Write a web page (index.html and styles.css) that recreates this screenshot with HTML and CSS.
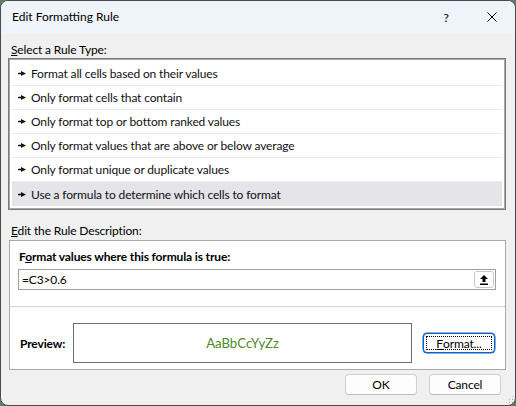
FILE: index.html
```html
<!DOCTYPE html>
<html>
<head>
<meta charset="utf-8">
<link rel="stylesheet" href="styles.css">
</head>
<body>
<div class="window">
  <div class="titlebar">
    <span class="title">Edit Formatting Rule</span>
    <span class="tb-btn">?</span>
    <span class="tb-btn"><svg width="10" height="10" viewBox="0 0 10 10"><path d="M0.5 0.5L9.5 9.5M9.5 0.5L0.5 9.5" stroke="#000" stroke-width="1" fill="none"/></svg></span>
  </div>
  <div class="body">
    <div class="label"><u>S</u>elect a Rule Type:</div>
    <div class="listbox">
      <div class="row"><svg class="bullet" width="8" height="5" viewBox="0 0 8 5"><path d="M0 1.8h3V0l5 2.5L3 5V3.2H0z"/></svg><span>Format all cells based on their values</span></div>
      <div class="row"><svg class="bullet" width="8" height="5" viewBox="0 0 8 5"><path d="M0 1.8h3V0l5 2.5L3 5V3.2H0z"/></svg><span>Only format cells that contain</span></div>
      <div class="row"><svg class="bullet" width="8" height="5" viewBox="0 0 8 5"><path d="M0 1.8h3V0l5 2.5L3 5V3.2H0z"/></svg><span>Only format top or bottom ranked values</span></div>
      <div class="row"><svg class="bullet" width="8" height="5" viewBox="0 0 8 5"><path d="M0 1.8h3V0l5 2.5L3 5V3.2H0z"/></svg><span>Only format values that are above or below average</span></div>
      <div class="row"><svg class="bullet" width="8" height="5" viewBox="0 0 8 5"><path d="M0 1.8h3V0l5 2.5L3 5V3.2H0z"/></svg><span>Only format unique or duplicate values</span></div>
      <div class="row selected"><svg class="bullet" width="8" height="5" viewBox="0 0 8 5"><path d="M0 1.8h3V0l5 2.5L3 5V3.2H0z"/></svg><span>Use a formula to determine which cells to format</span></div>
    </div>
    <div class="label label2"><u>E</u>dit the Rule Description:</div>
    <div class="group">
      <div class="heading">F<u>o</u>rmat values where this formula is true:</div>
      <div class="input">
        <span class="input-text">=C3&gt;0.6</span>
        <span class="ref-btn"><svg width="8" height="10" viewBox="0 0 8 10"><path d="M4 0L8 4H5.5V7H2.5V4H0Z" fill="#000"/><rect x="0" y="8.5" width="8" height="1.5" fill="#000"/></svg></span>
      </div>
      <div class="sep"></div>
      <div class="preview-row">
        <span class="preview-label">Preview:</span>
        <div class="preview-box">AaBbCcYyZz</div>
        <span class="btn focus"><u>F</u>ormat...</span>
      </div>
    </div>
    <div class="actions">
      <span class="btn">OK</span>
      <span class="btn">Cancel</span>
    </div>
  </div>
  <div class="grip"></div>
</div>
</body>
</html>
```
FILE: styles.css
```css
html, body { margin: 0; padding: 0; background: #5f7f62; }
body { font-family: Lato, "Noto Sans", sans-serif; font-size: 12px; letter-spacing: -0.14px; color: #000; }
.window { width: 516px; height: 406px; box-sizing: border-box; border: 1px solid #4a4a4a; border-radius: 8px; background: #f0f0f0; overflow: hidden; display: flex; flex-direction: column; position: relative; }
.titlebar { height: 32px; flex: none; background: #eef4f9; display: flex; align-items: center; padding-left: 11px; }
.title { flex: 1; line-height: 16px; letter-spacing: 0; }
.tb-btn { width: 46px; height: 32px; display: flex; align-items: center; justify-content: center; font-size: 12px; }
.body { padding: 9px 9px 0 7px; display: flex; flex-direction: column; }
.label { line-height: 16px; padding-left: 3px; }
.label2 { margin-top: 13px; margin-bottom: 1px; }
.listbox { height: 152px; box-sizing: border-box; border: 1px solid #7a7a7a; box-shadow: inset 0 0 0 1px #a8a8a8; padding: 3px; background: #fff; }
.row { height: 24px; box-sizing: border-box; border-bottom: 1px solid #ebebeb; display: flex; align-items: center; padding-left: 6px; color: #111; }
.row.selected { border-bottom: none; background: #e4e4e9; }
.bullet { fill: #111; margin-right: 5px; flex: none; }
.group { margin-left: 1px; height: 130px; box-sizing: border-box; border: 1px solid #a9a9a9; background: #fff; padding: 8px 0 0 0; }
.heading { font-weight: bold; line-height: 16px; padding-left: 9px; }
.input { margin: 4px 9px 0 8px; height: 21px; box-sizing: border-box; border: 1px solid #a0a0a0; display: flex; align-items: center; padding: 0 1px 0 3px; }
.input-text { flex: 1; }
.ref-btn { width: 20px; height: 17px; box-sizing: border-box; border: 1px solid #c9c9c9; border-radius: 3px; display: flex; align-items: center; justify-content: center; background: #fff; }
.sep { height: 1px; background: #d4d4d4; margin-top: 16px; }
.preview-row { margin-top: 16px; display: flex; align-items: center; padding-left: 10px; }
.preview-label { font-weight: bold; width: 53px; }
.preview-box { width: 339px; height: 40px; box-sizing: border-box; border: 1px solid #6e6e6e; display: flex; align-items: center; justify-content: center; color: #4f8a2a; margin-right: 11px; font-size: 13.2px; letter-spacing: 0; }
.btn { width: 72px; height: 21px; box-sizing: border-box; border: 1px solid #d0d0d0; border-bottom-color: #bdbdbd; border-radius: 4px; background: #fdfdfd; display: flex; align-items: center; justify-content: center; position: relative; }
.btn.focus { height: 20px; border: 1px solid #0a62c4; box-shadow: 0 0 0 0.5px #0a62c4; }
.btn.focus::after { content: ""; position: absolute; left: 2px; top: 2px; right: 2px; bottom: 2px; border: 1px dotted #000; }
.actions { display: flex; justify-content: flex-end; gap: 12px; margin-top: 4px; margin-right: 5px; }
.grip { position: absolute; right: 1px; bottom: 1px; width: 9px; height: 9px; background-image: radial-gradient(circle, #a0a0a0 0.8px, transparent 1px); background-size: 3px 3px; clip-path: polygon(100% 0, 100% 100%, 0 100%); }
```
